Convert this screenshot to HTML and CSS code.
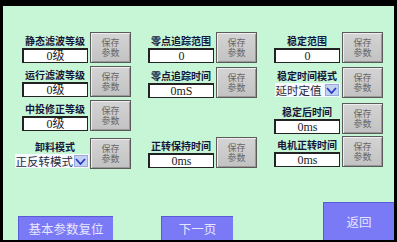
FILE: index.html
```html
<!DOCTYPE html>
<html lang="zh">
<head>
<meta charset="utf-8">
<link rel="stylesheet" href="styles.css">
</head>
<body>
<div class="screen">
  <div class="panel">
    <div class="cols">
      <div class="col">
        <div class="row">
          <div class="field"><div class="label">静态滤波等级</div><div class="input">0级</div></div>
          <div class="save"><span>保存</span><span>参数</span></div>
        </div>
        <div class="row mt4">
          <div class="field"><div class="label">运行滤波等级</div><div class="input">0级</div></div>
          <div class="save"><span>保存</span><span>参数</span></div>
        </div>
        <div class="row mt4">
          <div class="field"><div class="label">中投修正等级</div><div class="input">0级</div></div>
          <div class="save"><span>保存</span><span>参数</span></div>
        </div>
        <div class="row mt8">
          <div class="field"><div class="label">卸料模式</div><div class="select shift"><span class="sel-text">正反转模式</span><span class="arrow"><svg width="11" height="7" viewBox="0 0 11 7"><path d="M1 1 L5.5 6 L10 1" fill="none" stroke="#2a3cc8" stroke-width="1.8"/></svg></span></div></div>
          <div class="save"><span>保存</span><span>参数</span></div>
        </div>
      </div>
      <div class="col">
        <div class="row">
          <div class="field"><div class="label">零点追踪范围</div><div class="input">0</div></div>
          <div class="save"><span>保存</span><span>参数</span></div>
        </div>
        <div class="row mt5">
          <div class="field"><div class="label">零点追踪时间</div><div class="input">0mS</div></div>
          <div class="save"><span>保存</span><span>参数</span></div>
        </div>
        <div class="row mt40">
          <div class="field"><div class="label">正转保持时间</div><div class="input">0ms</div></div>
          <div class="save"><span>保存</span><span>参数</span></div>
        </div>
      </div>
      <div class="col">
        <div class="row">
          <div class="field"><div class="label">稳定范围</div><div class="input">0</div></div>
          <div class="save"><span>保存</span><span>参数</span></div>
        </div>
        <div class="row mt5">
          <div class="field"><div class="label">稳定时间模式</div><div class="select"><span class="sel-text">延时定值</span><span class="arrow"><svg width="11" height="7" viewBox="0 0 11 7"><path d="M1 1 L5.5 6 L10 1" fill="none" stroke="#2a3cc8" stroke-width="1.8"/></svg></span></div></div>
          <div class="save"><span>保存</span><span>参数</span></div>
        </div>
        <div class="row mt6">
          <div class="field"><div class="label">稳定后时间</div><div class="input">0ms</div></div>
          <div class="save"><span>保存</span><span>参数</span></div>
        </div>
        <div class="row mt3">
          <div class="field"><div class="label">电机正转时间</div><div class="input">0ms</div></div>
          <div class="save"><span>保存</span><span>参数</span></div>
        </div>
      </div>
    </div>
    <div class="footer">
      <div class="btn reset">基本参数复位</div>
      <div class="btn next">下一页</div>
      <div class="btn back">返回</div>
    </div>
  </div>
</div>
</body>
</html>
```
FILE: styles.css
```css
* { box-sizing: border-box; }
html, body { margin: 0; padding: 0; background: #000; }
body { width: 397px; height: 242px; overflow: hidden; font-family: "Noto Sans CJK SC", sans-serif; }
.screen { width: 397px; height: 242px; padding: 6px 3px 2px 3px; }
.panel { height: 234px; background: #c6f6d6; display: flex; flex-direction: column; }
.cols { display: grid; grid-template-columns: 109px 109px 109px; column-gap: 17px; padding: 26px 0 0 19px; }
.col { display: flex; flex-direction: column; }
.row { display: flex; align-items: flex-start; height: 31px; }
.mt3 { margin-top: 2px; }
.mt4 { margin-top: 3px; }
.mt5 { margin-top: 4px; }
.mt6 { margin-top: 5px; }
.mt8 { margin-top: 7px; }
.mt40 { margin-top: 39px; }
.field { width: 66px; margin-right: 2px; display: flex; flex-direction: column; align-items: center; }
.label { height: 16px; line-height: 18px; font-size: 10px; font-weight: 700; color: #16163a; white-space: nowrap; }
.input { width: 66px; height: 15px; background: #fff; border: 1px solid #222; border-top-width: 2px; border-left-width: 2px; font-family: "Liberation Serif", "Noto Sans CJK SC", serif; font-size: 12px; line-height: 12px; text-align: center; color: #222; overflow: hidden; }
.select { width: 65px; height: 14px; display: flex; align-items: center; background: #f6f9ff; }
.select.shift { width: 74px; margin-left: -7px; }
.sel-text { flex: 1; font-size: 11.5px; line-height: 14px; color: #2a2a3a; white-space: nowrap; padding-left: 1px; }
.arrow { flex: none; width: 14px; height: 12px; margin-right: 1px; background: #c4d2f2; border: 1px solid #9aa8d8; display: flex; align-items: center; justify-content: center; }
.save { width: 41px; height: 31px; background: linear-gradient(#d4d4d4, #c2c2c2); border: 1px solid #5a5a5a; box-shadow: inset 1px 1px 0 #eee, inset -1px -1px 0 #999; font-size: 9px; line-height: 10px; color: #666; display: flex; flex-direction: column; align-items: center; justify-content: center; }
.footer { margin-top: auto; display: flex; align-items: flex-end; padding-left: 15px; }
.btn { background: #7a7af6; color: #e6e6ff; font-size: 12.5px; display: flex; align-items: center; justify-content: center; border-top: 1px solid #5a5ad8; border-left: 1px solid #5a5ad8; }
.reset { width: 95px; height: 24px; }
.next { width: 72px; height: 24px; margin-left: 48px; }
.back { width: 71px; height: 38px; margin-left: auto; }
```
